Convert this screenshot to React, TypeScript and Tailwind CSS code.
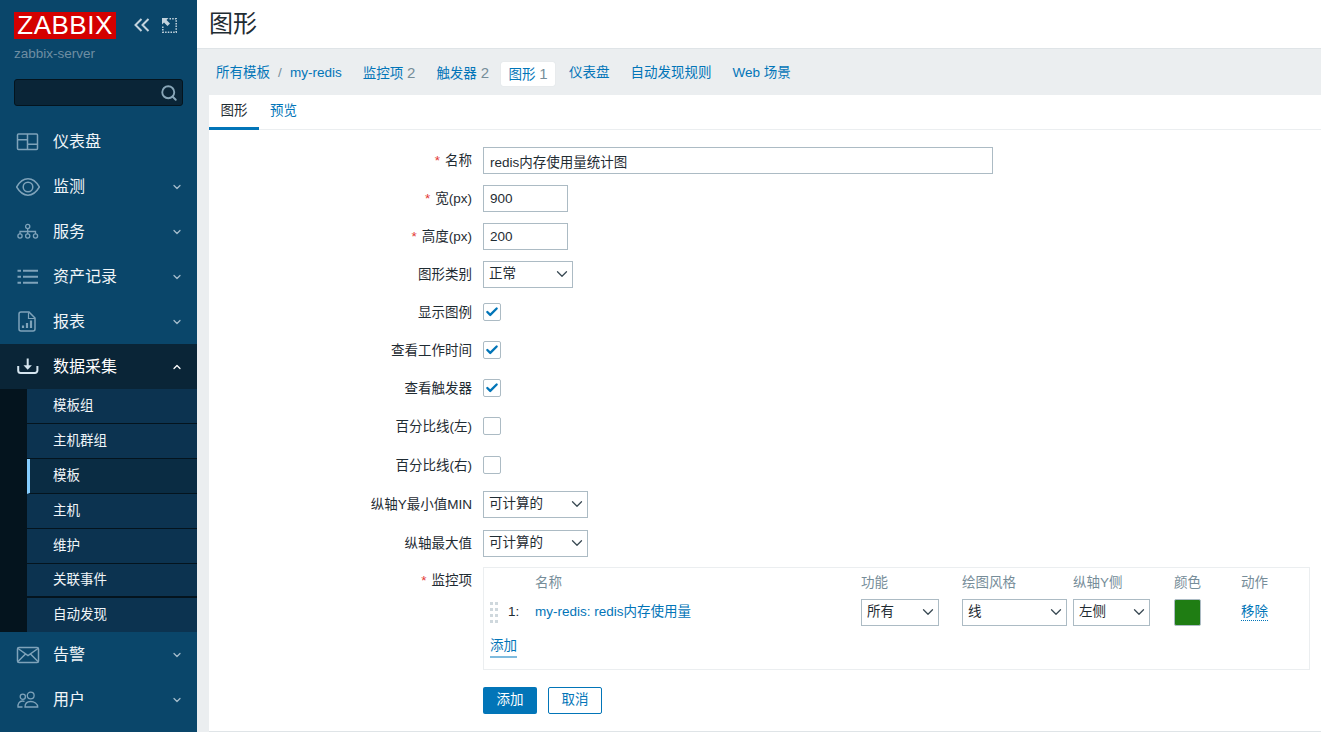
import { ChevronDown, ChevronUp, Search, Check } from "lucide-react";
import type { ReactNode } from "react";

const ico = "w-[24px] h-[24px] text-[#7fa3ba] shrink-0";

const DashIcon = () => (
  <svg viewBox="0 0 24 24" className={ico} fill="none" stroke="currentColor" strokeWidth="1.5">
    <rect x="1.500" y="4" width="20" height="15.500" rx="1" />
    <path d="M11.500 4v15.500M1.500 9.800h10M11.500 14.200h10" />
  </svg>
);
const EyeIcon = () => (
  <svg viewBox="0 0 24 24" className={ico} fill="none" stroke="currentColor" strokeWidth="1.500">
    <path d="M.6 12C4 6.200 8 3.800 12 3.800s8 2.400 11.400 8.200C20 17.800 16 20.200 12 20.200S4 17.800.6 12z" />
    <circle cx="12" cy="12" r="4.800" />
  </svg>
);
const ServiceIcon = () => (
  <svg viewBox="0 0 24 24" className={ico} fill="none" stroke="currentColor" strokeWidth="1.300">
    <circle cx="11.700" cy="6.500" r="2.100" />
    <circle cx="4" cy="16" r="2.100" />
    <circle cx="11.700" cy="16" r="2.100" />
    <circle cx="19.500" cy="16" r="2.100" />
    <path d="M11.700 8.600v5.300M4 13.900v-2.400h15.500v2.400" />
  </svg>
);
const ListIcon = () => (
  <svg viewBox="0 0 24 24" className={ico} fill="none" stroke="currentColor" strokeWidth="2">
    <path d="M7 5.700h15M7 11.700h15M7 17.700h15M1.500 5.700H5M1.500 11.700H5M1.500 17.700H5" />
  </svg>
);
const ReportIcon = () => (
  <svg viewBox="0 0 24 24" className={ico} fill="none" stroke="currentColor" strokeWidth="1.500">
    <path d="M5 2h8l6 6v11a2 2 0 0 1-2 2H5a2 2 0 0 1-2-2V4a2 2 0 0 1 2-2z" />
    <path d="M12.500 2.500V8.500H19" strokeWidth="1.200" />
    <path d="M7 18v-2.500M11 18v-5M15 18v-7.500" strokeWidth="2.200" />
  </svg>
);
const DownloadIcon = () => (
  <svg viewBox="0 0 24 24" className="w-[24px] h-[24px] text-[#d5e5ef] shrink-0" fill="none" stroke="currentColor" strokeWidth="2">
    <path d="M11.700 3.500v8" />
    <path d="M7.500 10.300h8.400l-4.200 4.400z" fill="currentColor" stroke="none" />
    <path d="M2.200 11v4.500a2.500 2.500 0 0 0 2.500 2.500h14.200a2.500 2.500 0 0 0 2.500-2.500V11" />
  </svg>
);
const MailIcon = () => (
  <svg viewBox="0 0 24 24" className={ico} fill="none" stroke="currentColor" strokeWidth="1.500">
    <rect x="1.500" y="4.500" width="21" height="15" rx="1.500" />
    <path d="M2 5.500 12 12.500 22 5.500M2 18.500 9.500 11M22 18.500 14.500 11" />
  </svg>
);
const UsersIcon = () => (
  <svg viewBox="0 0 24 24" className={ico} fill="none" stroke="currentColor" strokeWidth="1.300">
    <circle cx="14.700" cy="7.500" r="3.400" />
    <circle cx="6.800" cy="8.800" r="2.600" />
    <path d="M9 19c0-3.500 2.300-5.500 5.700-5.500s7 2 7 5.500zM6.500 19H2c-.3-3 1.200-6 4.500-6 .8 0 1.500.2 2 .5" />
  </svg>
);
const CollapseIcon = () => (
  <svg viewBox="0 0 16 14" className="w-[16px] h-[14px] text-[#c3d3dd]" fill="none" stroke="currentColor" strokeWidth="2">
    <path d="M7.500 1 1.500 7l6 6M14.500 1l-6 6 6 6" />
  </svg>
);
const ExpandIcon = () => (
  <svg viewBox="0 0 15 15" className="w-[15px] h-[15px] text-[#c3d3dd]" fill="none" stroke="currentColor">
    <path d="M7.500.8h6.700v13.400H.8V7.500" strokeWidth="1.500" strokeDasharray="1.500 1.200" />
    <path d="M0 0h6.500L4.500 2l3.500 3.500-2.500 2.500L2 4.500 0 6.500z" fill="currentColor" stroke="none" />
  </svg>
);
const DragIcon = () => (
  <svg viewBox="0 0 8 22" className="w-[8px] h-[22px] text-[#cfd8dd]" fill="currentColor">
    {[0, 6, 12, 18].map((y) => (
      <g key={y}>
        <rect x="0" y={y} width="3" height="3" />
        <rect x="5" y={y} width="3" height="3" />
      </g>
    ))}
  </svg>
);

const MenuItem = ({ icon, label, open, more = true }: { icon: ReactNode; label: string; open?: boolean; more?: boolean }) => (
  <div className={`h-[45px] flex items-center pl-[16px] pr-[14px] ${open ? "bg-[#0a2537]" : ""}`}>
    <div className="w-[37px] shrink-0">{icon}</div>
    <span className={`text-[16px] flex-1 ${open ? "text-white" : "text-[#f0f5f8]"}`}>{label}</span>
    {more && (open ? <ChevronUp size={12} strokeWidth={2.500} className="text-white" /> : <ChevronDown size={12} strokeWidth={2.500} className="text-[#a4bccb]" />)}
  </div>
);

const subItems = [
  { label: "模板组", cls: "h-[35px] border-b" },
  { label: "主机群组", cls: "h-[35px] border-b" },
  { label: "模板", cls: "h-[35px] border-b", active: true },
  { label: "主机", cls: "h-[35px] border-b" },
  { label: "维护", cls: "h-[35px] border-b" },
  { label: "关联事件", cls: "h-[34px] border-b-2 pt-[1px]" },
  { label: "自动发现", cls: "h-[34px] pt-[1px]" },
];

const Sidebar = () => (
  <aside className="w-[197px] shrink-0 h-full bg-[#0a466a] flex flex-col">
    <div className="pl-[14px] pr-[14px] pt-[12px]">
      <div className="flex items-start">
        <div className="w-[102px] h-[27px] bg-[#d40000] text-white text-[26px] leading-[27px] tracking-[0.500px] text-center">ZABBIX</div>
        <div className="ml-[18px] mt-[6px]"><CollapseIcon /></div>
        <div className="ml-[12px] mt-[6px]"><ExpandIcon /></div>
      </div>
      <div className="mt-[6px] text-[13.500px] leading-[18px] text-[#6e8ea3]">zabbix-server</div>
      <div className="mt-[16px] h-[27px] bg-[#0a2537] border border-[#04141e] rounded-[3px] flex items-center justify-end pr-[4px]">
        <Search size={18} strokeWidth={2.500} className="text-[#88a6b8]" />
      </div>
    </div>
    <nav className="mt-[13px] flex flex-col">
      <MenuItem icon={<DashIcon />} label="仪表盘" more={false} />
      <MenuItem icon={<EyeIcon />} label="监测" />
      <MenuItem icon={<ServiceIcon />} label="服务" />
      <MenuItem icon={<ListIcon />} label="资产记录" />
      <MenuItem icon={<ReportIcon />} label="报表" />
      <MenuItem icon={<DownloadIcon />} label="数据采集" open />
      <div className="bg-[#04141e] pl-[27px]">
        {subItems.map((s) => (
          <div
            key={s.label}
            className={`${s.cls} flex items-center text-[13.500px] text-[#f0f5f8] border-[#04141e] ${s.active ? "bg-[#0a2c43] border-l-[3px] border-l-[#85cdff] pl-[23px]" : "bg-[#0c3350] pl-[26px]"}`}
          >
            {s.label}
          </div>
        ))}
      </div>
      <MenuItem icon={<MailIcon />} label="告警" />
      <MenuItem icon={<UsersIcon />} label="用户" />
    </nav>
  </aside>
);

const tabLink = "text-[#0275b8]";
const countCls = "text-[#768d99] text-[15px]";
const TopNav = () => (
  <div className="h-[46px] bg-[#ebeef0] flex items-center pl-[19px] pt-[3px] text-[13.500px]">
    <span className={tabLink}>所有模板</span>
    <span className="mx-[8px] text-[#768d99] w-[4px]">/</span>
    <span className={tabLink}>my-redis</span>
    <span className={`${tabLink} ml-[21px]`}>监控项 <span className={countCls}>2</span></span>
    <span className={`${tabLink} ml-[21px]`}>触发器 <span className={countCls}>2</span></span>
    <span className={`${tabLink} ml-[12px] h-[24px] leading-[24px] w-[54px] text-center bg-white rounded-[2px] shadow-[0_0_1px_#c8d0d6]`}>图形 <span className={countCls}>1</span></span>
    <span className={`${tabLink} ml-[14px]`}>仪表盘</span>
    <span className={`${tabLink} ml-[21px]`}>自动发现规则</span>
    <span className={`${tabLink} ml-[21px]`}>Web 场景</span>
  </div>
);

const Row = ({ label, req, children, h = "h-[27px]", mt = "" }: { label: string; req?: boolean; children: ReactNode; h?: string; mt?: string }) => (
  <div className={`flex ${h} ${mt}`}>
    <label className="w-[263px] shrink-0 text-right h-[27px] leading-[27px] text-[13.500px] text-[#1f2c33]">
      {req && <span className="text-[#e33734] mr-[5px]">*</span>}
      {label}
    </label>
    <div className="ml-[11px] flex-1 min-w-0">{children}</div>
  </div>
);

const inputCls = "block h-[27px] border border-[#acbbc4] bg-white px-[6px] text-[13.500px] text-[#1f2c33] outline-none";

const Select = ({ value, w }: { value: string; w: string }) => (
  <div className={`relative ${w} h-[27px]`}>
    <select defaultValue={value} className="appearance-none w-full h-full border border-[#acbbc4] bg-white pl-[5px] text-[13.500px] text-[#1f2c33] outline-none">
      <option>{value}</option>
    </select>
    <ChevronDown size={18} strokeWidth={1.700} className="absolute right-[2px] top-[4px] text-[#3a4a54] pointer-events-none" />
  </div>
);

const Checkbox = ({ on }: { on?: boolean }) => (
  <div className="w-[18px] h-[18px] mt-[4px] rounded-[2px] border border-[#acbbc4] bg-white flex items-center justify-center">
    {on && <Check size={14} strokeWidth={4} className="text-[#0275b8]" />}
  </div>
);

const colsCls = "grid grid-cols-[51px_326px_101px_111px_101px_67px_1fr]";

const ItemsTable = () => (
  <div className="w-[827px] h-[103px] border border-[#ebeef0] text-[13.500px]">
    <div className={`${colsCls} h-[31px] items-center text-[#768d99]`}>
      <span />
      <span>名称</span>
      <span>功能</span>
      <span>绘图风格</span>
      <span>纵轴Y侧</span>
      <span>颜色</span>
      <span>动作</span>
    </div>
    <div className={`${colsCls} h-[27px] items-center`}>
      <div className="flex items-center pl-[6px]">
        <DragIcon />
        <span className="ml-[10px] text-[#1f2c33]">1:</span>
      </div>
      <span className="text-[#0275b8]">my-redis: redis内存使用量</span>
      <Select value="所有" w="w-[78px]" />
      <Select value="线" w="w-[105px]" />
      <Select value="左侧" w="w-[77px]" />
      <div className="w-[27px] h-[27px] rounded-[2px] border border-[#acbbc4] bg-[#1f7d13]" />
      <span className="text-[#0275b8] w-fit border-b border-dotted border-[#0275b8] leading-[16px]">移除</span>
    </div>
    <div className="mt-[10px] ml-[6px] w-fit text-[#0275b8] border-b-2 border-[#7fbbde] leading-[20px]">添加</div>
  </div>
);

const FormBody = () => (
  <div className="flex-1 min-h-0 ml-[12px] bg-white border-b border-[#dfe4e7] flex flex-col">
    <div className="h-[35px] border-b border-[#ebeef0] flex text-[13.500px]">
      <div className="w-[50px] h-[35px] text-center leading-[31px] text-[#1f2c33] border-b-[3px] border-[#0275b8]">图形</div>
      <div className="ml-[11px] leading-[31px] text-[#0275b8]">预览</div>
    </div>
    <div className="pt-[17px] flex flex-col gap-[11px]">
      <Row label="名称" req>
        <input readOnly value="redis内存使用量统计图" className={`${inputCls} w-[510px]`} />
      </Row>
      <Row label="宽(px)" req>
        <input readOnly value="900" className={`${inputCls} w-[85px]`} />
      </Row>
      <Row label="高度(px)" req>
        <input readOnly value="200" className={`${inputCls} w-[85px]`} />
      </Row>
      <Row label="图形类别">
        <Select value="正常" w="w-[90px]" />
      </Row>
      <Row label="显示图例"><Checkbox on /></Row>
      <Row label="查看工作时间"><Checkbox on /></Row>
      <Row label="查看触发器"><Checkbox on /></Row>
      <Row label="百分比线(左)"><Checkbox /></Row>
      <Row label="百分比线(右)" mt="mt-[1px]"><Checkbox /></Row>
      <Row label="纵轴Y最小值MIN" mt="mt-[1px]">
        <Select value="可计算的" w="w-[105px]" />
      </Row>
      <Row label="纵轴最大值" mt="mt-[1px]">
        <Select value="可计算的" w="w-[105px]" />
      </Row>
      <Row label="监控项" req h="h-[103px]" mt="-mt-[1px]">
        <ItemsTable />
      </Row>
      <div className="ml-[274px] mt-[6px] flex gap-[11px] text-[13.500px]">
        <button className="w-[54px] h-[27px] bg-[#0275b8] text-white rounded-[2px]">添加</button>
        <button className="w-[54px] h-[27px] border border-[#0275b8] text-[#0275b8] rounded-[2px] bg-white">取消</button>
      </div>
    </div>
  </div>
);

export default function App() {
  return (
    <div className="w-[1321px] h-[732px] overflow-hidden flex bg-[#ebeef0] font-['Liberation_Sans','Noto_Sans_CJK_SC',sans-serif]">
      <Sidebar />
      <main className="flex-1 min-w-0 flex flex-col">
        <header className="h-[49px] shrink-0 bg-white border-b border-[#dfe4e7] pl-[12px] text-[24px] leading-[47px] text-[#1f2c33]">图形</header>
        <TopNav />
        <FormBody />
      </main>
    </div>
  );
}
